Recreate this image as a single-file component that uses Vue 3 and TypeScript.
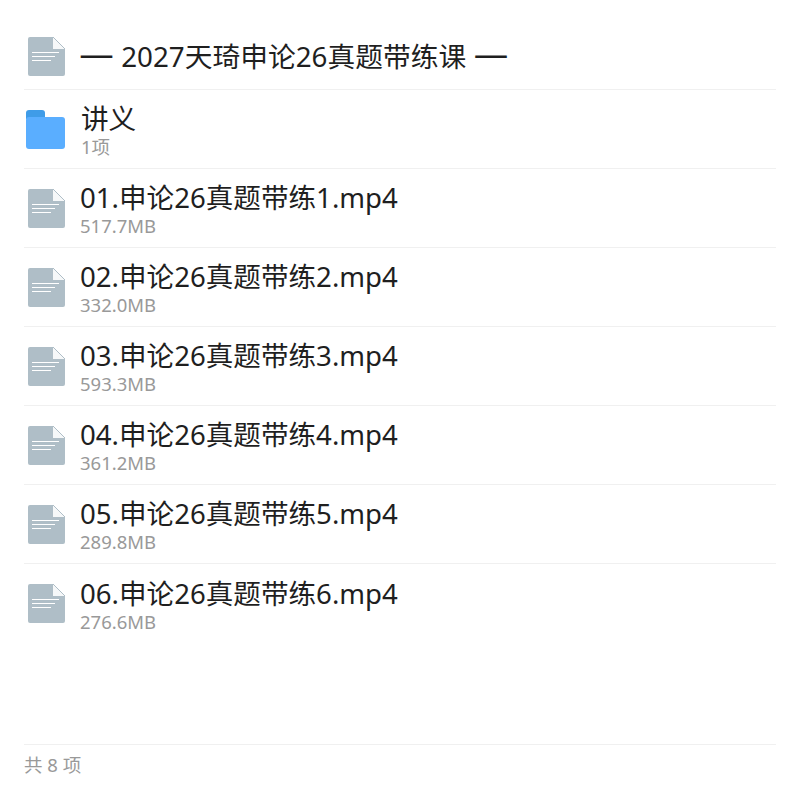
<template>
  <div class="page">
    <div class="list">
      <div class="row row--title">
        <svg class="icon-file" viewBox="0 0 37 39" width="37" height="39">
          <path d="M2 0H25L37 12V37a2 2 0 0 1-2 2H2a2 2 0 0 1-2-2V2a2 2 0 0 1 2-2Z" fill="#afbec7" />
          <path d="M25 0V12H37Z" fill="#f6f8f9" />
          <path d="M25 0L37 12" stroke="#afbec7" stroke-width="1" fill="none" />
          <path d="M4 15.500H31M4 19.500H27M4 23.500H23" stroke="#fff" stroke-width="1" fill="none" />
        </svg>
        <span class="title"><span class="dash">—</span> 2027天琦申论26真题带练课 <span class="dash">—</span></span>
      </div>
      <div class="row row--folder">
        <svg class="icon-folder" viewBox="0 0 39 39" width="39" height="39">
          <path d="M3 0H16a3 3 0 0 1 3 3V9H0V3a3 3 0 0 1 3-3Z" fill="#3f9ce8" />
          <rect x="0" y="7" width="39" height="32" rx="3" fill="#5aaeff" />
        </svg>
        <div class="info">
          <div class="name">讲义</div>
          <div class="meta">1项</div>
        </div>
      </div>
      <div v-for="file in files" :key="file.name" class="row">
        <svg class="icon-file" viewBox="0 0 37 39" width="37" height="39">
          <path d="M2 0H25L37 12V37a2 2 0 0 1-2 2H2a2 2 0 0 1-2-2V2a2 2 0 0 1 2-2Z" fill="#afbec7" />
          <path d="M25 0V12H37Z" fill="#f6f8f9" />
          <path d="M25 0L37 12" stroke="#afbec7" stroke-width="1" fill="none" />
          <path d="M4 15.500H31M4 19.500H27M4 23.500H23" stroke="#fff" stroke-width="1" fill="none" />
        </svg>
        <div class="info">
          <div class="name">{{ file.name }}</div>
          <div class="meta">{{ file.size }}</div>
        </div>
      </div>
    </div>
    <div class="footer">共 8 项</div>
  </div>
</template>

<script setup lang="ts">
const files = [
  { name: '01.申论26真题带练1.mp4', size: '517.7MB' },
  { name: '02.申论26真题带练2.mp4', size: '332.0MB' },
  { name: '03.申论26真题带练3.mp4', size: '593.3MB' },
  { name: '04.申论26真题带练4.mp4', size: '361.2MB' },
  { name: '05.申论26真题带练5.mp4', size: '289.8MB' },
  { name: '06.申论26真题带练6.mp4', size: '276.6MB' },
];
</script>

<style>
html,
body {
  background: #fff;
}
</style>

<style scoped>
.page {
  width: 800px;
  height: 800px;
  box-sizing: border-box;
  padding: 24px 24px 0;
  display: flex;
  flex-direction: column;
  font-family: "Noto Sans", "Noto Sans CJK SC", sans-serif;
  background: #fff;
}

.list {
  flex: 1;
}

.row {
  height: 79px;
  box-sizing: border-box;
  display: flex;
  align-items: center;
  padding-left: 4px;
  gap: 15px;
  border-bottom: 1px solid #f0f0f0;
}

.row:last-child {
  border-bottom: none;
}

.row--title {
  height: 66px;
  gap: 14px;
}

.row--folder {
  padding-left: 2px;
  gap: 16px;
}

.icon-file,
.icon-folder {
  flex: none;
}

.info {
  padding-top: 1px;
}

.title,
.name {
  font-size: 27.600px;
  line-height: 34px;
  color: #1f1f1f;
  white-space: nowrap;
}

.name {
  margin-bottom: 1px;
}

.title {
  font-size: 27.750px;
  padding-bottom: 2px;
}

.dash {
  font-family: "DejaVu Sans", sans-serif;
  font-size: 35px;
  line-height: 1;
}

.meta {
  font-size: 18.500px;
  line-height: 22px;
  color: #999;
}

.footer {
  height: 56px;
  box-sizing: border-box;
  border-top: 1px solid #f0f0f0;
  padding-top: 9px;
  font-size: 18.500px;
  line-height: 22px;
  color: #999;
}
</style>
